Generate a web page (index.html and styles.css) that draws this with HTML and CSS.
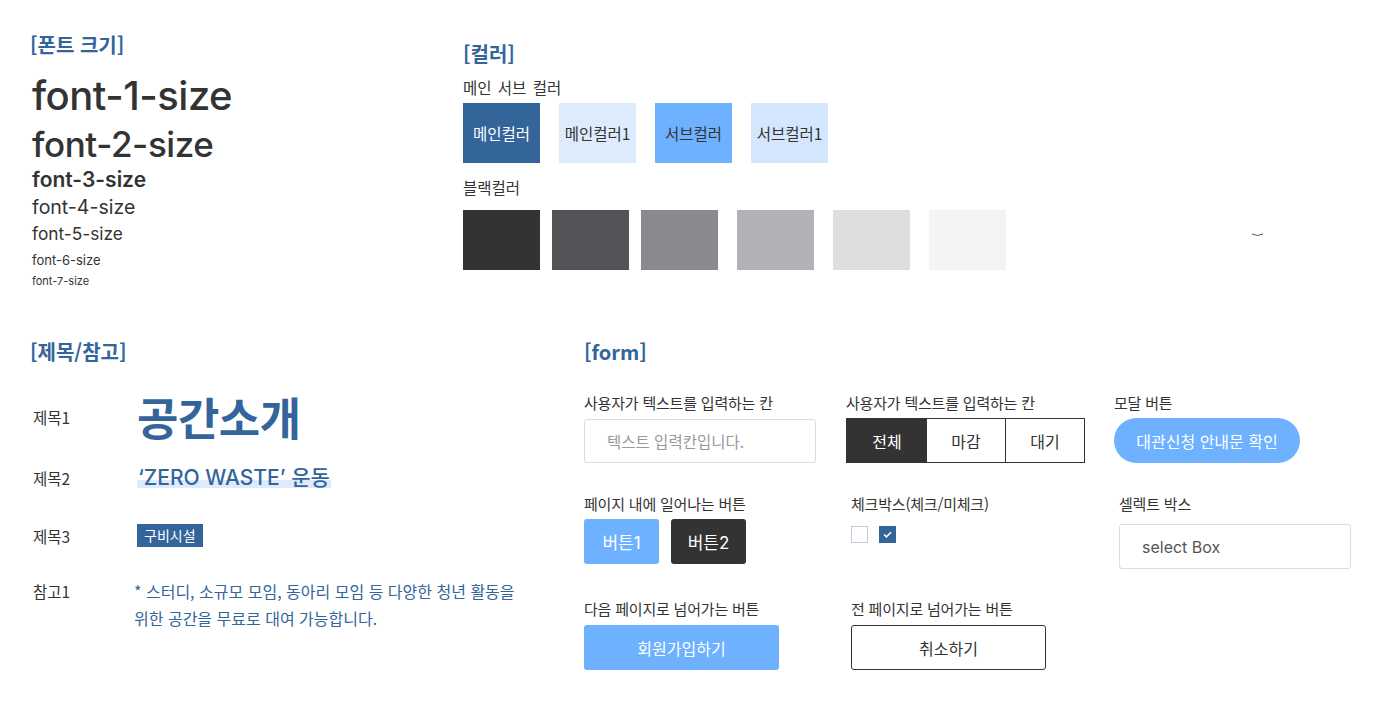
FILE: index.html
```html
<!DOCTYPE html>
<html lang="ko">
<head>
<meta charset="utf-8">
<title>Guide</title>
<link rel="stylesheet" href="styles.css">
</head>
<body>
<div class="page">
  <div class="top">
    <section class="fonts">
      <h2 class="sec-title">[폰트 크기]</h2>
      <p class="f1">font-1-size</p>
      <p class="f2">font-2-size</p>
      <p class="f3">font-3-size</p>
      <p class="f4">font-4-size</p>
      <p class="f5">font-5-size</p>
      <p class="f6">font-6-size</p>
      <p class="f7">font-7-size</p>
    </section>
    <section class="colors">
      <h2 class="sec-title">[컬러]</h2>
      <p class="sub-label">메인 서브 컬러</p>
      <div class="swatches main-row">
        <div class="sw sw-main">메인컬러</div>
        <div class="sw sw-main1">메인컬러1</div>
        <div class="sw sw-sub">서브컬러</div>
        <div class="sw sw-sub1">서브컬러1</div>
      </div>
      <p class="sub-label black-label">블랙컬러</p>
      <div class="swatches black-row">
        <div class="sw b1"></div>
        <div class="sw b2"></div>
        <div class="sw b3"></div>
        <div class="sw b4"></div>
        <div class="sw b5"></div>
        <div class="sw b6"></div>
        <svg class="stray" width="13" height="6" viewBox="0 0 13 6"><path d="M1 2 Q6.5 5 12 2" fill="none" stroke="#555" stroke-width="1"/></svg>
      </div>
    </section>
  </div>

  <div class="bottom">
    <section class="titles">
      <h2 class="sec-title">[제목/참고]</h2>
      <div class="trow r1">
        <span class="tlabel">제목1</span>
        <span class="h1">공간소개</span>
      </div>
      <div class="trow r2">
        <span class="tlabel">제목2</span>
        <span class="h2"><span class="hl">‘ZERO WASTE’ 운동</span></span>
      </div>
      <div class="trow r3">
        <span class="tlabel">제목3</span>
        <span class="badge">구비시설</span>
      </div>
      <div class="trow r4">
        <span class="tlabel">참고1</span>
        <p class="note">* 스터디, 소규모 모임, 동아리 모임 등 다양한 청년 활동을<br>위한 공간을 무료로 대여 가능합니다.</p>
      </div>
    </section>

    <section class="form">
      <h2 class="sec-title">[form]</h2>
      <div class="frow row1">
        <div class="fcol c1">
          <p class="flabel">사용자가 텍스트를 입력하는 칸</p>
          <div class="input">텍스트 입력칸입니다.</div>
        </div>
        <div class="fcol c2">
          <p class="flabel">사용자가 텍스트를 입력하는 칸</p>
          <div class="tabs">
            <span class="tab on">전체</span>
            <span class="tab t2">마감</span>
            <span class="tab t3">대기</span>
          </div>
        </div>
        <div class="fcol c3">
          <p class="flabel">모달 버튼</p>
          <button class="pill">대관신청 안내문 확인</button>
        </div>
      </div>
      <div class="frow row2">
        <div class="fcol c1">
          <p class="flabel">페이지 내에 일어나는 버튼</p>
          <div class="btns">
            <button class="sbtn blue">버튼1</button>
            <button class="sbtn dark">버튼2</button>
          </div>
        </div>
        <div class="fcol c2 ind">
          <p class="flabel">체크박스(체크/미체크)</p>
          <div class="checks">
            <span class="chk"></span>
            <span class="chk checked"><svg width="9" height="7" viewBox="0 0 9 7"><path d="M1 3.5 L3.4 5.8 L8 1.2" fill="none" stroke="#fff" stroke-width="1.6"/></svg></span>
          </div>
        </div>
        <div class="fcol c3 ind">
          <p class="flabel">셀렉트 박스</p>
          <div class="select">select Box</div>
        </div>
      </div>
      <div class="frow row3">
        <div class="fcol c1">
          <p class="flabel">다음 페이지로 넘어가는 버튼</p>
          <button class="wbtn blue">회원가입하기</button>
        </div>
        <div class="fcol c2 ind">
          <p class="flabel">전 페이지로 넘어가는 버튼</p>
          <button class="wbtn line">취소하기</button>
        </div>
      </div>
    </section>
  </div>
</div>
</body>
</html>
```

FILE: styles.css
```css
* { box-sizing: border-box; }
html, body { margin: 0; padding: 0; background: #fff; }
body {
  font-family: Inter, "Noto Sans CJK KR", sans-serif;
  color: #333;
}
p, h2 { margin: 0; }
button { font-family: inherit; cursor: pointer; }

.page { padding: 31px 0 0 30px; }

.sec-title {
  font-size: 20px;
  line-height: 28px;
  font-weight: 700;
  color: #33659b;
  font-family: "Noto Sans CJK KR", Inter, sans-serif;
}

.top { display: flex; }
.fonts { width: 433px; }
.fonts p { padding-left: 2px; }
.f1 { margin-top: 13px; font-size: 40px; line-height: 48px; font-weight: 500; letter-spacing: -0.5px; }
.f2 { font-size: 35px; line-height: 48px; font-weight: 500; letter-spacing: -0.4px; }
.f3 { font-size: 21px; line-height: 24px; font-weight: 600; }
.f4 { font-size: 19.5px; line-height: 30px; }
.f5 { font-size: 17.3px; line-height: 24px; }
.f6 { font-size: 13px; line-height: 28px; }
.f7 { font-size: 11px; line-height: 14px; }

.colors { padding-top: 9px; flex: 1; }
.sub-label {
  margin-top: 9px;
  font-size: 15.5px;
  line-height: 20px;
  font-family: "Noto Sans CJK KR", sans-serif;
  word-spacing: 2px;
}
.black-label { margin-top: 14px; }
.swatches { display: flex; }
.main-row { margin-top: 6px; gap: 19px; }
.black-row { margin-top: 13px; gap: 19px; align-items: center; }
.sw {
  width: 77px; height: 60px;
  display: flex; align-items: center; justify-content: center;
  font-size: 15.5px;
  font-family: "Noto Sans CJK KR", sans-serif;
}
.sw-main { background: #33659b; color: #fff; }
.sw-main1 { background: #deebfc; }
.sw-sub { background: #6eb1ff; }
.sw-sub1 { background: #d4e6fd; }
.b1 { background: #333333; margin-right: -7px; }
.b2 { background: #545358; margin-right: -7px; }
.b3 { background: #8a898d; }
.b4 { background: #b1b2b6; }
.b5 { background: #dedede; }
.b6 { background: #f4f4f4; }
.stray { margin-left: 226px; margin-top: -10px; }

.bottom { display: flex; margin-top: 50px; }
.titles { width: 554px; }
.trow { display: flex; align-items: center; padding-left: 3px; }
.tlabel { width: 104px; flex: none; font-size: 15.5px; font-family: "Noto Sans CJK KR", Inter, sans-serif; }
.r1 { margin-top: 23px; height: 56px; }
.h1 {
  font-family: "Noto Sans CJK KR", sans-serif;
  font-size: 45px; font-weight: 700; color: #33659b;
  line-height: 56px; letter-spacing: -0.5px;
}
.r2 { margin-top: 18px; height: 30px; }
.h2 { font-size: 21px; font-weight: 500; color: #33659b; line-height: 30px; }
.hl { background: linear-gradient(transparent 62%, #deebfc 62%, #deebfc 94%, transparent 94%); padding: 0 1px; }
.r3 { margin-top: 31px; height: 23px; }
.badge {
  background: #33659b; color: #fff;
  font-size: 14px; line-height: 23px; padding: 0 7px;
  font-family: "Noto Sans CJK KR", sans-serif;
}
.r4 { margin-top: 31px; align-items: flex-start; }
.r4 .tlabel { line-height: 27px; }
.note {
  margin-left: -3px;
  font-size: 16px; line-height: 27px; color: #33659b;
  font-family: "Noto Sans CJK KR", Inter, sans-serif;
}

.form { flex: 1; }
.frow { display: flex; }
.row1 { margin-top: 27px; }
.row2 { margin-top: 31px; }
.row3 { margin-top: 30px; }
.fcol.c1 { width: 262px; }
.fcol.c2 { width: 268px; }
.fcol.ind { padding-left: 5px; }
.flabel {
  font-size: 15px; line-height: 20px;
  letter-spacing: -0.2px;
  font-family: "Noto Sans CJK KR", Inter, sans-serif;
}
.input {
  margin-top: 6px;
  width: 232px; height: 44px;
  border: 1px solid #dcdcdc; border-radius: 3px;
  padding-left: 22px;
  display: flex; align-items: center;
  font-size: 15.5px; color: #999;
  font-family: "Noto Sans CJK KR", sans-serif;
}
.tabs { margin-top: 5px; display: flex; height: 45px; border: 1px solid #333; width: 239px; }
.tab {
  display: flex; align-items: center; justify-content: center;
  font-size: 16px; font-family: "Noto Sans CJK KR", sans-serif;
}
.tab.on { width: 80px; background: #333; color: #fff; }
.tab.t2 { width: 78px; }
.tab.t3 { flex: 1; border-left: 1px solid #333; }
.pill {
  margin-top: 5px;
  width: 186px; height: 45px;
  border: none; border-radius: 23px;
  background: #6eb1ff; color: #fff;
  font-size: 16px;
  font-family: "Noto Sans CJK KR", sans-serif;
}
.btns { margin-top: 5px; display: flex; gap: 12px; }
.sbtn {
  width: 75px; height: 45px; border: none; border-radius: 3px;
  color: #fff; font-size: 17px;
  font-family: Inter, "Noto Sans CJK KR", sans-serif;
}
.blue { background: #6eb1ff; }
.dark { background: #333; }
.checks { margin-top: 12px; display: flex; gap: 11px; }
.chk { width: 17px; height: 17px; border: 1px solid #bccbdf; display: flex; align-items: center; justify-content: center; }
.chk.checked { background: #33659b; border-color: #33659b; }
.select {
  margin-top: 10px;
  width: 232px; height: 45px;
  border: 1px solid #dcdcdc; border-radius: 3px;
  padding-left: 22px;
  display: flex; align-items: center;
  font-size: 16px; color: #555;
}
.wbtn {
  margin-top: 6px;
  width: 195px; height: 45px; border-radius: 3px;
  font-size: 16px; font-family: "Noto Sans CJK KR", sans-serif;
}
.wbtn.blue { border: none; color: #fff; }
.wbtn.line { background: #fff; border: 1px solid #333; color: #333; }
```
